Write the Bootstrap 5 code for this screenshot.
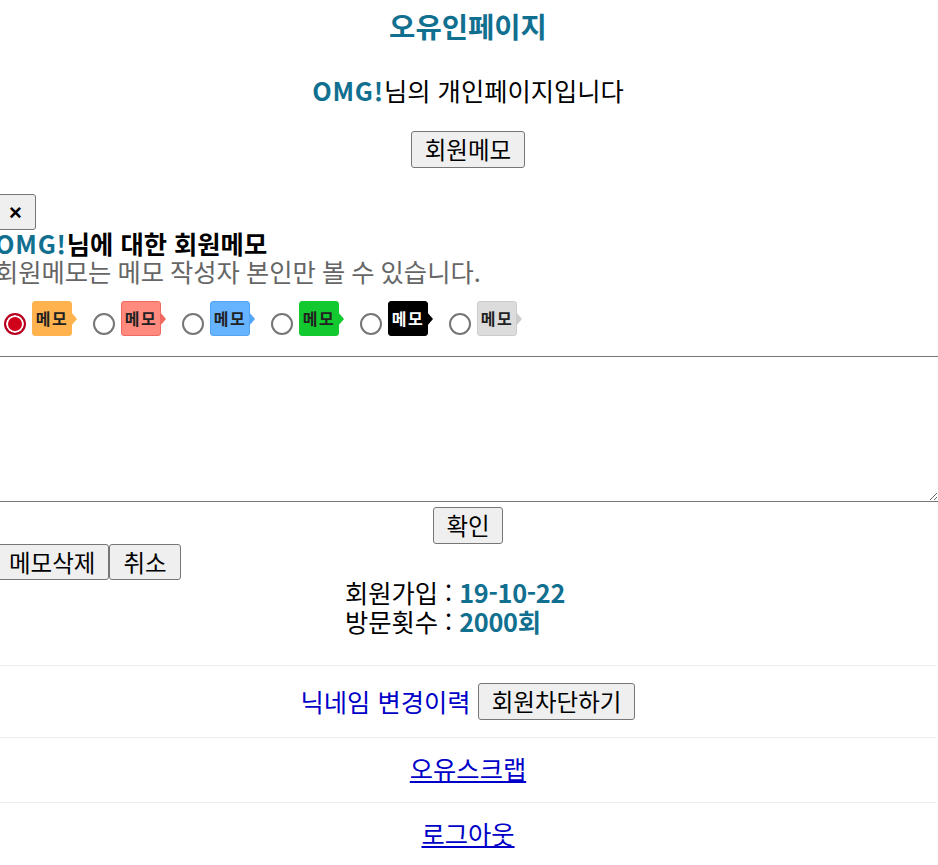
<!DOCTYPE html>
<html lang="ko">
<head>
<meta charset="utf-8">
<title>오유인페이지</title>
<link href="https://cdn.jsdelivr.net/npm/bootstrap@5.3.0/dist/css/bootstrap.min.css" rel="stylesheet">
<style>
html,body{overflow:hidden;height:865px}
body{font-family:"Noto Sans CJK KR","Noto Sans",sans-serif;font-size:25.3px;line-height:29px;color:#000;background:#fff}
main{padding-right:2px}
.teal{color:#116f90;font-weight:700;letter-spacing:.8px}
.page-title{font-size:28.6px;line-height:36px;font-weight:700;color:#116f90;margin:8px 0 0}
.intro{margin:27px 0 0;line-height:38px}
.native-btn{background:#efefef;border:1px solid #767676;border-radius:3px;color:#000;font:inherit;font-size:23.5px;line-height:29px;padding:3px 13px;height:37px}
.open-row{margin-top:22px}
.memo-panel{margin-top:26px;margin-left:-5px}
.close-x{width:41px;height:36px;padding:0;font-family:"Liberation Sans",sans-serif;font-size:22px;font-weight:700;display:block}
.memo-head{font-weight:700;line-height:27px;margin-top:0}
.memo-note{color:#666;line-height:29px;margin:0;word-spacing:-1px}
.swatches{display:flex;gap:21px;margin:15px 0 0 9px;height:44px}
.swatch-item{display:flex;align-items:flex-start;gap:6px;margin:0}
.swatch-item input{appearance:none;width:22px;height:22px;border:2px solid #767676;border-radius:50%;background:#fff;margin:12px 0 0;flex:none}
.swatch-item input:checked{border-color:#b8001f;background:#d0021b;box-shadow:inset 0 0 0 2px #fff}
.tag{position:relative;display:block;width:40px;height:35px;border-radius:3px;border:1px solid;font-size:16px;line-height:33px;font-weight:700;text-align:center;letter-spacing:1.5px;color:#222}
.tag::after{content:"";position:absolute;left:100%;top:10px;border:7px solid transparent;border-left:6px solid;border-left-color:inherit;border-right:0}
.c1{background:#ffb24d;border-color:#ffb24d}
.c2{background:#ff8a7d;border-color:#f0695f}
.c3{background:#66b3ff;border-color:#52a5f5}
.c4{background:#12c92f;border-color:#12c92f}
.c5{background:#000;border-color:#000;color:#fff}
.c6{background:#dcdcdc;border-color:#ccc}
.memo-area{display:block;width:calc(100% + 3px);height:146px;margin-top:11px;border:1px solid #767676;padding:2px;font:inherit;background:#fff}
.confirm-row{margin-left:5px;margin-top:5px;line-height:0}
.confirm-row .native-btn{width:70px;padding:0}
.action-row{display:flex;margin-top:0}
.action-row .native-btn{height:36px;padding:0 13px}
.stats{line-height:29px;margin-top:-2px;padding-right:26px}
.stats .teal{letter-spacing:-.3px}
.stats-block{display:inline-block;text-align:left}
.link-row{border-top:1px solid #ececec;text-align:center}
.link-row a{color:#0000c8;text-decoration:none}
.under{text-decoration:underline!important}
.r1{margin-top:29px;height:72px;padding-top:17px}
.r2{height:65px;padding-top:16px}
.r3{height:65px;padding-top:16px}
.r1 .native-btn{height:37px;padding:0 13px;vertical-align:1px}
</style>
</head>
<body>
<main>
  <h1 class="page-title text-center">오유인페이지</h1>
  <p class="intro text-center"><span class="teal">OMG!</span>님의 개인페이지입니다</p>
  <div class="open-row text-center"><button type="button" class="native-btn">회원메모</button></div>
  <section class="memo-panel">
    <button type="button" class="native-btn close-x">×</button>
    <div class="memo-head"><span class="teal">OMG!</span>님에 대한 회원메모</div>
    <p class="memo-note">회원메모는 메모 작성자 본인만 볼 수 있습니다.</p>
    <div class="swatches">
      <label class="swatch-item"><input type="radio" name="c" checked><span class="tag c1">메모</span></label>
      <label class="swatch-item"><input type="radio" name="c"><span class="tag c2">메모</span></label>
      <label class="swatch-item"><input type="radio" name="c"><span class="tag c3">메모</span></label>
      <label class="swatch-item"><input type="radio" name="c"><span class="tag c4">메모</span></label>
      <label class="swatch-item"><input type="radio" name="c"><span class="tag c5">메모</span></label>
      <label class="swatch-item"><input type="radio" name="c"><span class="tag c6">메모</span></label>
    </div>
    <textarea class="memo-area"></textarea>
    <div class="confirm-row text-center"><button type="button" class="native-btn">확인</button></div>
    <div class="action-row"><button type="button" class="native-btn">메모삭제</button><button type="button" class="native-btn">취소</button></div>
  </section>
  <div class="stats text-center"><div class="stats-block">회원가입 : <span class="teal">19-10-22</span><br>방문횟수 : <span class="teal">2000회</span></div></div>
  <div class="link-row r1"><a href="#">닉네임 변경이력</a> <button type="button" class="native-btn">회원차단하기</button></div>
  <div class="link-row r2"><a href="#" class="under">오유스크랩</a></div>
  <div class="link-row r3"><a href="#" class="under">로그아웃</a></div>
</main>
<script src="https://cdn.jsdelivr.net/npm/bootstrap@5.3.0/dist/js/bootstrap.bundle.min.js"></script>
</body>
</html>
